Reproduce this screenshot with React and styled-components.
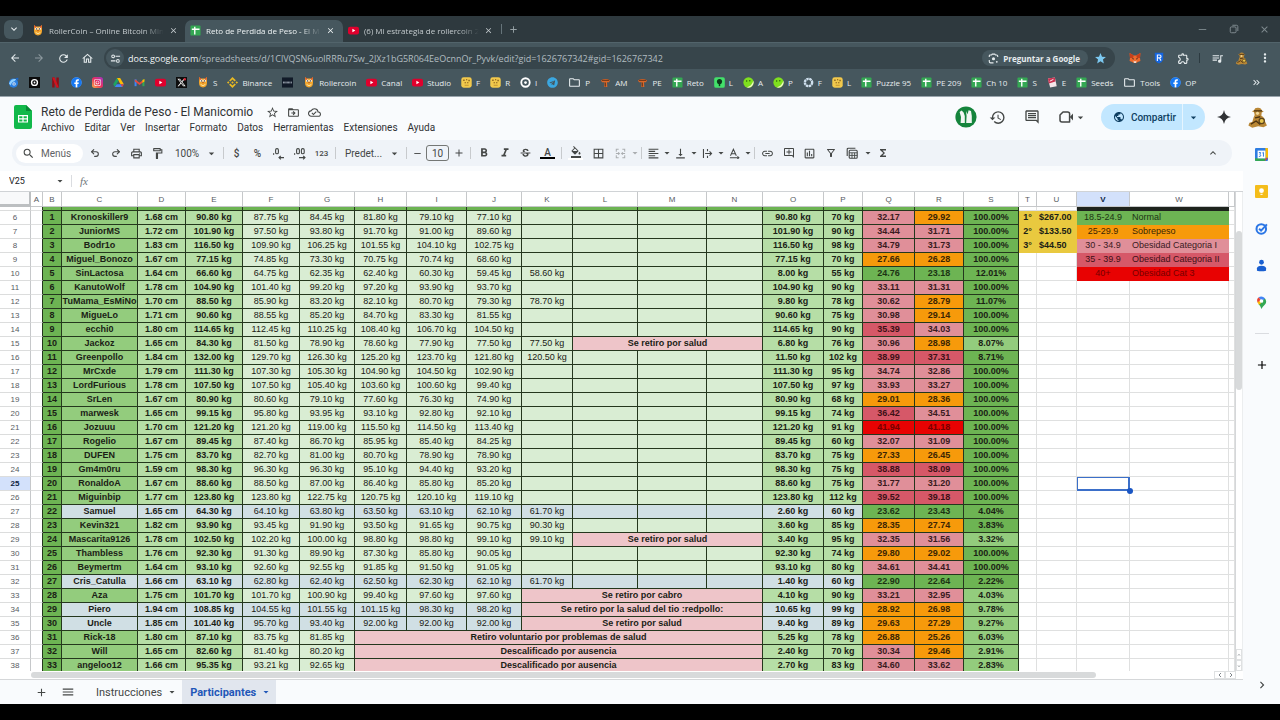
import React from 'react'
import styled, { createGlobalStyle, css } from 'styled-components'
import {
	MdAdd,
	MdArrowBack,
	MdArrowDropDown,
	MdArrowForward,
	MdBorderAll,
	MdClose,
	MdDriveFileMoveOutline,
	MdFormatAlignLeft,
	MdFormatBold,
	MdFormatColorFill,
	MdFormatItalic,
	MdFunctions,
	MdHistory,
	MdKeyboardArrowDown,
	MdKeyboardArrowUp,
	MdKeyboardDoubleArrowRight,
	MdLink,
	MdMenu,
	MdMoreVert,
	MdNavigateNext,
	MdOutlineAddComment,
	MdOutlineCloudDone,
	MdOutlineComment,
	MdOutlineExtension,
	MdOutlineFilterAlt,
	MdOutlineFolder,
	MdOutlineFormatPaint,
	MdOutlineHome,
	MdOutlineInsertChart,
	MdOutlinePrint,
	MdPublic,
	MdQueueMusic,
	MdRefresh,
	MdRemove,
	MdSearch,
	MdStar,
	MdStarBorder,
	MdStrikethroughS,
	MdVerticalAlignBottom,
} from 'react-icons/md'
import { FaFacebook, FaInstagram, FaTelegram } from 'react-icons/fa'
import { FaXTwitter } from 'react-icons/fa6'
import { SiBinance } from 'react-icons/si'
import { Redo2, Undo2 } from 'lucide-react'

const GlobalStyle = createGlobalStyle`
	* {
		box-sizing: border-box;
	}
	body {
		margin: 0;
		background: #000;
		font-family: Roboto, "Liberation Sans", sans-serif;
	}
	button, input, select {
		margin: 0;
		padding: 0;
		border: 0;
		background: none;
		color: inherit;
		font: inherit;
	}
	svg {
		flex-shrink: 0;
	}
`

const Screen = styled.div`
	display: flex;
	flex-direction: column;
	height: 100vh;
	padding: 16px 0;
	overflow: hidden;
	background: #000;
`

/* ---------- browser ---------- */

const Browser = styled.header`
	background: #46575e;
	color: #e6ecee;
	font-family: "Open Sans", "Noto Sans", sans-serif;
	border-bottom: 1px solid #9aa5ad;
`

const TabStrip = styled.div`
	display: flex;
	align-items: center;
	height: 26px;
	padding-left: 4px;
	background: #2e393e;
`

const TabSearch = styled.button`
	display: flex;
	align-items: center;
	justify-content: center;
	width: 19px;
	height: 19px;
	margin-right: 4px;
	border-radius: 6px;
	background: #46575e;
`

const Tab = styled.div`
	display: flex;
	align-items: center;
	width: 158px;
	height: 22px;
	margin-top: 4px;
	padding: 0 8px 2px 5px;
	gap: 5px;
	border-radius: 7px 7px 0 0;
	font-size: 8px;
	color: ${ p => p.$active ? '#eef3f4' : '#c3cacd' };
	background: ${ p => p.$active ? '#46575e' : 'transparent' };
`

const TabTitle = styled.span`
	flex: 1;
	white-space: nowrap;
	mask-image: linear-gradient(90deg, #000 82%, transparent);
`

const PlainButton = styled.button`
	display: flex;
	align-items: center;
	justify-content: center;
	width: ${ p => p.$w || 'auto' };
	color: ${ p => p.$color || 'inherit' };
	${ p => p.$end && css`
		margin-left: auto;
	` }
`

const TabDivider = styled.span`
	width: 1px;
	height: 10px;
	margin-right: 6px;
	background: #66747a;
`

const WindowControls = styled.div`
	display: flex;
	margin-left: auto;
	color: #7f8a8f;
`

const NavBar = styled.div`
	display: flex;
	align-items: center;
	height: 31px;
	padding: 0 3px;
	border-top: 1px solid #52646b;
`

const AddressBar = styled.div`
	display: flex;
	flex: 1;
	align-items: center;
	height: 22px;
	margin: 0 7px 0 5px;
	padding: 0 8px 0 2px;
	border-radius: 11px;
	background: #37454b;
`

const SiteInfo = styled.button`
	display: flex;
	align-items: center;
	justify-content: center;
	width: 18px;
	height: 18px;
	margin-right: 4px;
	border-radius: 9px;
	background: #46575e;
`

const Url = styled.div`
	flex: 1;
	font-size: 9px;
	white-space: nowrap;
	color: #b2bdc1;
`

const UrlHost = styled.span`
	color: #f2f6f7;
`

const AskGoogle = styled.button`
	display: flex;
	align-items: center;
	height: 16px;
	margin-right: 6px;
	padding: 0 8px 0 6px;
	gap: 4px;
	border-radius: 8px;
	background: #46575e;
	font-size: 8px;
	font-weight: 700;
	white-space: nowrap;
`

const NavDivider = styled.span`
	width: 1px;
	height: 10px;
	margin: 0 5px 0 4px;
	background: #2c3a40;
`

const Bookmarks = styled.nav`
	display: flex;
	align-items: center;
	height: 23px;
	padding: 0 18px 5px 3px;
	font-size: 8px;
`

const Bookmark = styled.a`
	display: flex;
	align-items: center;
	padding: 0 5px;
	gap: 4px;
	color: inherit;
	text-decoration: none;
	white-space: nowrap;
`

/* ---------- docs ---------- */

const Docs = styled.main`
	display: flex;
	flex: 1;
	flex-direction: column;
	min-height: 0;
	background: #f9fbfd;
	color: #444746;
`

const DocsHeader = styled.div`
	display: flex;
	align-items: center;
	height: 40px;
	padding: 0 7px 0 14px;
`

const TitleBlock = styled.div`
	display: flex;
	flex-direction: column;
	flex: 1;
	margin-left: 9px;
	padding-top: 4px;
`

const TitleRow = styled.div`
	display: flex;
	align-items: center;
	height: 17px;
	gap: 8px;
`

const DocTitle = styled.h1`
	margin: 0 5px 0 0;
	font-size: 12px;
	font-weight: 400;
	line-height: 16px;
	color: #303234;
`

const MenuRow = styled.div`
	display: flex;
	gap: 10px;
`

const MenuButton = styled.button`
	font-size: 10px;
	line-height: 14px;
	color: #303234;
`

const HeaderActions = styled.div`
	display: flex;
	align-items: center;
	gap: 8px;
`

const Share = styled.div`
	display: flex;
	height: 26px;
	margin-right: 2px;
	border-radius: 13px;
	overflow: hidden;
	background: #c2e7ff;
	color: #0f3f62;
`

const ShareButton = styled.button`
	display: flex;
	align-items: center;
	padding: 0 6px 0 12px;
	gap: 6px;
	font-size: 10px;
	font-weight: 500;
	border-right: 1px solid #e6f5ff;
`

const ShareMenu = styled.button`
	display: flex;
	align-items: center;
	width: 22px;
	padding-left: 4px;
`

const Body = styled.div`
	display: flex;
	flex: 1;
	min-height: 0;
`

const Editor = styled.div`
	display: flex;
	flex: 1;
	flex-direction: column;
	min-width: 0;
`

const Toolbar = styled.div`
	display: flex;
	align-items: center;
	height: 26px;
	margin: 3px 11px 5px 12px;
	padding: 0 8px 0 4px;
	border-radius: 13px;
	background: #eff3f8;
	font-size: 10px;
`

const SearchMenus = styled.label`
	display: flex;
	align-items: center;
	width: 67px;
	height: 19px;
	margin-right: 1px;
	padding-left: 6px;
	gap: 6px;
	border-radius: 10px;
	background: #fff;
`

const SearchInput = styled.input`
	width: 34px;
	&::placeholder {
		color: #5f6366;
		opacity: 1;
	}
`

const Tool = styled.button`
	display: flex;
	align-items: center;
	justify-content: center;
	width: ${ p => p.$w || '21px' };
	height: 20px;
	font-size: ${ p => p.$small ? '8px' : '10px' };
	font-weight: 500;
	opacity: ${ p => p.$off ? 0.4 : 1 };
`

const ToolDivider = styled.span`
	width: 1px;
	height: 12px;
	margin: 0 2px;
	background: #c7cacd;
`

const SelectBox = styled.label`
	display: flex;
	align-items: center;
	width: ${ p => p.$w };
	padding: 0 3px 0 7px;
`

const ToolSelect = styled.select`
	appearance: none;
	flex: 1;
	min-width: 0;
	font-size: 10px;
`

const FontSize = styled.input`
	width: 23px;
	height: 16px;
	border: 1px solid #747775;
	border-radius: 3px;
	text-align: center;
`

const ColorBar = styled.span`
	display: flex;
	flex-direction: column;
	align-items: center;
	width: 15px;
	font-size: 10px;
	line-height: 9px;
	border-bottom: 2px solid ${ p => p.$color };
`

const FormulaBar = styled.div`
	display: flex;
	align-items: center;
	height: 20px;
	padding-left: 9px;
	background: #fff;
`

const NameBox = styled.input`
	width: 45px;
	font-size: 9px;
	color: #202124;
`

const FormulaMark = styled.span`
	margin: 0 8px 0 5px;
	padding-left: 8px;
	border-left: 1px solid #dadce0;
	font: italic 11px "Liberation Serif", serif;
	color: #6f757a;
`

const FormulaInput = styled.input`
	flex: 1;
	font-size: 9px;
`

const GridFrame = styled.div`
	display: flex;
	flex: 1;
	min-height: 0;
	background: #fff;
	border-top: 1px solid #d0d3d6;
`

const GridClip = styled.div`
	flex: 1;
	min-width: 0;
	overflow: hidden;
`

const Sheet = styled.table`
	width: 100%;
	table-layout: fixed;
	border-spacing: 0;
	font: 9px/13px "Liberation Sans", Arial, sans-serif;
	color: #1a2115;
`

const Corner = styled.th`
	height: 15px;
	padding: 0;
	background: #f8f9fa;
	border-right: 2px solid #bcbfc1;
	border-bottom: 3px solid #bcbfc1;
`

const ColHead = styled.th`
	height: 15px;
	padding: 0;
	font-size: 8px;
	font-weight: ${ p => p.$on ? 700 : 400 };
	color: ${ p => p.$on ? '#0b1d3f' : '#575b5f' };
	background: ${ p => p.$on ? '#d3e1fb' : '#fff' };
	border-right: 1px solid #c6c8ca;
	border-bottom: 1px solid #c6c8ca;
`

const RowHead = styled.th`
	padding: 0;
	font-size: 8px;
	font-weight: ${ p => p.$on ? 700 : 400 };
	color: ${ p => p.$on ? '#0b1d3f' : '#575b5f' };
	background: ${ p => p.$on ? '#d3e1fb' : '#fff' };
	border-right: 1px solid #c6c8ca;
	border-bottom: 1px solid #dcdddd;
`

const Cell = styled.td`
	position: relative;
	height: ${ p => p.$thin ? '4px' : '14px' };
	padding: 0;
	white-space: nowrap;
	text-align: ${ p => p.$align || 'center' };
	font-weight: ${ p => p.$bold ? 700 : 400 };
	background: ${ p => p.$bg || '#fff' };
	border-right: 1px solid #dfe0e0;
	border-bottom: 1px solid #dfe0e0;
	${ p => p.$boxed && css`
		border-color: #24371d;
	` }
	${ p => p.$before && css`
		border-right-color: #24371d;
	` }
	${ p => p.$plain && css`
		padding: 0 2px;
		border-color: ${ p.$bg };
	` }
	${ p => p.$ink && css`
		color: ${ p.$ink };
	` }
`

const SelectedCell = styled(Cell)`
	box-shadow: inset 0 0 0 1px #3b6fc9;
	border-color: #3b6fc9;
	&::after {
		content: '';
		position: absolute;
		right: -4px;
		bottom: -4px;
		z-index: 1;
		width: 6px;
		height: 6px;
		border-radius: 3px;
		background: #1a56c4;
	}
`

const VScroll = styled.div`
	display: flex;
	flex-direction: column;
	width: 8px;
	border-left: 1px solid #d5d7d9;
	border-right: 1px solid #eceeef;
	background: #fff;
`

const VTrack = styled.div`
	display: flex;
	flex: 1;
	flex-direction: column;
	padding-top: 39px;
`

const VThumb = styled.div`
	height: 38%;
	border-radius: 3px;
	background: #d8dadb;
`

const ScrollStep = styled.button`
	display: flex;
	align-items: center;
	justify-content: center;
	width: ${ p => p.$side ? '11px' : '100%' };
	height: ${ p => p.$side ? '8px' : '11px' };
	border: 1px solid #dfe1e2;
	color: #80868b;
`

const HScroll = styled.div`
	display: flex;
	align-items: center;
	height: 9px;
	padding: 0 7px 0 31px;
	background: #fff;
	border-bottom: 1px solid #d5d7d9;
`

const HTrack = styled.div`
	flex: 1;
`

const HThumb = styled.div`
	width: 90%;
	height: 6px;
	border-radius: 3px;
	background: #d8dadb;
`

const SheetTabs = styled.div`
	display: flex;
	align-items: center;
	height: 24px;
	padding-left: 28px;
	background: #f9fbfd;
`

const TabList = styled.div`
	display: flex;
	margin-left: 7px;
`

const SheetTab = styled.button`
	display: flex;
	align-items: center;
	height: 24px;
	padding: 0 4px 0 8px;
	gap: 4px;
	font-size: 11px;
	font-weight: ${ p => p.$active ? 700 : 400 };
	color: ${ p => p.$active ? '#1f57b8' : '#444746' };
	background: ${ p => p.$active ? '#e1e6ee' : 'transparent' };
`

const SidePanel = styled.aside`
	display: flex;
	flex-direction: column;
	align-items: center;
	width: 37px;
	padding: 11px 0 12px;
	gap: 24px;
`

const SideDivider = styled.span`
	width: 14px;
	height: 1px;
	background: #dadce0;
`

const SideToggle = styled(PlainButton)`
	margin-top: auto;
`

/* ---------- small drawings ---------- */

const Icon = ({ size = 11, children }) => (
	<svg width={ size } height={ size } viewBox="0 0 12 12" fill="none">{ children }</svg>
)

const Owl = () => (
	<Icon size={ 12 }>
		<path d="M2 1 L4 2.4 H8 L10 1 L10 7 Q10 11 6 11.6 Q2 11 2 7Z" fill="#f2a52c" />
		<path d="M2 1 L4.4 3 L3 5Z M10 1 L7.6 3 L9 5Z" fill="#d4472a" />
		<circle cx="4.4" cy="4.8" r="1.3" fill="#fff" />
		<circle cx="7.6" cy="4.8" r="1.3" fill="#fff" />
		<circle cx="4.5" cy="4.9" r="0.6" fill="#222" />
		<circle cx="7.5" cy="4.9" r="0.6" fill="#222" />
		<path d="M5.2 6 H6.8 L6 7.4Z" fill="#a33a1c" />
		<path d="M3.6 8.4 Q6 11 8.4 8.4" stroke="#fbe3a0" strokeWidth="1" />
	</Icon>
)

const SheetMark = () => (
	<Icon>
		<rect x="0.5" y="0.5" width="11" height="11" rx="1" fill="#34a853" />
		<path d="M5.2 2 V10.4 M2 4.7 H10.4" stroke="#fff" strokeWidth="1.5" />
	</Icon>
)

const YouTube = () => (
	<Icon>
		<rect x="0" y="1.8" width="12" height="8.6" rx="2.2" fill="#e0002d" />
		<path d="M4.8 4.2 L8 6.1 L4.8 8Z" fill="#fff" />
	</Icon>
)

const Swirl = () => (
	<Icon>
		<circle cx="6" cy="6.6" r="5" fill="#2a7fe0" />
		<path d="M1 7 Q4 1 9 2.4 L7 4.6 Q4 5 3 9Z" fill="#8fd0ff" />
		<circle cx="6.6" cy="7.6" r="1.8" fill="#e8f4ff" />
		<circle cx="6.6" cy="7.6" r="0.8" fill="#1452a8" />
		<path d="M8 1 L11.4 0.8 L11 4.4Z" fill="#1b66c8" />
	</Icon>
)

const BlackRing = () => (
	<Icon>
		<rect width="12" height="12" fill="#0b0b0b" />
		<circle cx="6" cy="6" r="3.2" stroke="#fff" strokeWidth="1.5" />
		<circle cx="6" cy="6" r="1" fill="#fff" />
	</Icon>
)

const RedN = () => (
	<Icon>
		<path d="M2.4 0.6 H5 V11.4 H2.4Z M7 0.6 H9.6 V11.4 H7Z" fill="#8f0d15" />
		<path d="M2.4 0.6 H5 L9.6 11.4 H7Z" fill="#d2121f" />
	</Icon>
)

const Facebook = () => (
	<Icon>
		<circle cx="6" cy="6" r="5.4" fill="#fff" />
		<FaFacebook size={ 12 } color="#1778f2" />
	</Icon>
)

const Instagram = () => (
	<Icon>
		<defs>
			<linearGradient id="insta" x1="0" y1="1" x2="1" y2="0">
				<stop offset="0" stopColor="#fcb045" />
				<stop offset="0.5" stopColor="#e8305f" />
				<stop offset="1" stopColor="#a033c8" />
			</linearGradient>
		</defs>
		<rect width="12" height="12" rx="3" fill="url(#insta)" />
		<svg x="1.5" y="1.5" width="9" height="9"><FaInstagram size={ 9 } color="#fff" /></svg>
	</Icon>
)

const Drive = () => (
	<Icon>
		<path d="M4.2 1 H7.8 L11.8 8 H8.2Z" fill="#fbbc04" />
		<path d="M4.2 1 L6 4.2 L2 11 L0.2 8Z" fill="#1ea362" />
		<path d="M4 8 H11.8 L10 11 H2Z" fill="#4285f4" />
		<path d="M8.2 8 H11.8 L10 11Z" fill="#e94235" />
	</Icon>
)

const Gmail = () => (
	<Icon>
		<path d="M0.6 2.6 H2.8 V10 H0.6Z" fill="#4285f4" />
		<path d="M9.2 2.6 H11.4 V10 H9.2Z" fill="#34a853" />
		<path d="M1 2.4 L6 6.2 L11 2.4 V5 L6 8.6 L1 5Z" fill="#e8493a" />
		<path d="M9.2 3.6 L11.4 2.2 V4.8 L9.2 6.4Z" fill="#fbbc04" />
	</Icon>
)

const XLogo = () => (
	<Icon>
		<rect width="12" height="12" fill="#0d0d0d" />
		<svg x="1" y="1" width="10" height="10"><FaXTwitter size={ 10 } color="#f4f4f4" /></svg>
		<circle cx="9.6" cy="2.4" r="1.3" fill="#d62a3a" />
	</Icon>
)

const DarkBadge = () => (
	<Icon>
		<rect y="0.5" width="12" height="11" fill="#111a28" />
		<path d="M1.6 5 V7 M3 5 V7 M4.4 5 V7 M5.8 5 V7 M7.2 5 V7 M8.6 5 V7 M10.2 5 V7" stroke="#c8d2dc" strokeWidth="0.8" />
	</Icon>
)

const YellowFace = () => (
	<Icon>
		<rect x="0.3" y="0.3" width="11.4" height="11.4" rx="2.6" fill="#f2c94c" />
		<path d="M3.2 2.8 V4.4 M6.2 2.4 V3.6 M8.8 3 V4.6 M4.6 5.6 V6.8 M7.4 5.6 V6.8" stroke="#6b4312" strokeWidth="1.2" />
		<path d="M4 9 H8.4" stroke="#b98a2c" strokeWidth="0.9" />
	</Icon>
)

const WhiteRing = ({ hex }) => (
	<Icon>
		<circle cx="6" cy="6" r={ hex ? 4 : 4.6 } stroke={ hex ? '#cfe0ee' : '#fff' } strokeWidth={ hex ? 2.6 : 2 } strokeDasharray={ hex ? '2.6 0.6' : undefined } />
		{ !hex && <circle cx="6" cy="6" r="1.5" fill="#fff" /> }
	</Icon>
)

const Pillar = () => (
	<Icon>
		<path d="M1 3.6 Q6 0.8 11 3.6 L9.8 5.6 H7.6 L8 11 H4.6 L5 5.6 H2.2Z" fill="#d9682a" />
		<path d="M2 3.6 H10 M5.8 6 V10.4" stroke="#5a2a12" strokeWidth="1" />
	</Icon>
)

const GreenTree = () => (
	<Icon>
		<rect x="0.2" y="0.2" width="11.6" height="11.6" rx="2" fill="#43e06a" />
		<circle cx="6" cy="5" r="2.8" fill="#0c3a1b" />
		<path d="M6 6 V10" stroke="#0c3a1b" strokeWidth="1.6" />
	</Icon>
)

const Lime = () => (
	<Icon>
		<circle cx="6" cy="6" r="5.6" fill="#7fe01e" />
		<path d="M11.2 4 A5.6 5.6 0 0 1 4 11.2 Q9.6 10 11.2 4Z" fill="#f3f7c8" />
		<circle cx="4" cy="4.4" r="0.8" fill="#285c0a" />
		<circle cx="7.4" cy="4" r="0.8" fill="#285c0a" />
	</Icon>
)

const RedPaper = () => (
	<Icon>
		<path d="M1 1.6 L8.6 0.6 L10.6 10 L3.4 11.4Z" fill="#f4e6ea" />
		<path d="M1 1.6 L8.6 0.6 L9.2 5 L2 7Z" fill="#c93150" />
		<path d="M3 4.6 L7 2.6" stroke="#fff" strokeWidth="1" />
	</Icon>
)

const Fox = () => (
	<Icon size={ 12 }>
		<path d="M0.6 1 L4.8 3.4 H7.2 L11.4 1 L11 6 L11.4 9 L8.8 10 L7.2 11 H4.8 L3.2 10 L0.6 9 L1 6Z" fill="#ef6a2c" />
		<path d="M0.6 1 L4.8 3.4 L4 6 L1 6Z M11.4 1 L7.2 3.4 L8 6 L11 6Z" fill="#c4401d" />
		<path d="M4.4 8.6 L6 9.4 L7.6 8.6 L7 11 H5Z" fill="#f4d9c8" />
		<path d="M3.4 6.6 L4.8 7 M8.6 6.6 L7.2 7" stroke="#222" strokeWidth="0.9" />
	</Icon>
)

const Shield = () => (
	<Icon size={ 12 }>
		<path d="M1.8 0.8 H10.2 V7.4 Q9.6 10 6 11.6 Q2.4 10 1.8 7.4Z" fill="#1465e0" />
		<path d="M4.4 9 V3 H6.6 Q8 3 8 4.4 Q8 5.8 6.6 5.8 H4.6 M6.4 5.8 L8 8.6" stroke="#e8f1ff" strokeWidth="1.2" />
	</Icon>
)

const Monkey = ({ size = 13 }) => (
	<Icon size={ size }>
		<path d="M4 1.8 Q4.4 0.2 6.4 0.4 Q8.2 0.4 8.4 2 L9.6 2.6 L8.4 3.2 L8.2 5 Q10.2 6 10.2 8 L11.4 10.6 L9.4 11.6 L6.4 11 L3 11.8 L0.8 10.6 L1.4 9 L3 8.6 L3.8 5.8 L4.4 4.6 L4 3 L2.8 2.4Z" fill="#b98736" />
		<path d="M4 2.2 H8.6 M2.2 9.8 L5.2 8 L7.6 10 M4.6 6.2 L7.6 5.6" stroke="#4b3211" strokeWidth="0.8" />
		<circle cx="6" cy="3.6" r="0.9" fill="#f0d79a" />
		<circle cx="8.4" cy="8" r="1.5" stroke="#5c431c" strokeWidth="0.7" fill="#e6c44c" />
	</Icon>
)

const SiteSliders = () => (
	<Icon>
		<circle cx="3.4" cy="3.6" r="1.5" stroke="currentColor" strokeWidth="1.1" />
		<circle cx="8.6" cy="8.6" r="1.5" stroke="currentColor" strokeWidth="1.1" />
		<path d="M6 3.6 H11 M1 8.6 H6" stroke="currentColor" strokeWidth="1.2" />
	</Icon>
)

const Lens = () => (
	<Icon>
		<path d="M1.4 4.4 V3 Q1.4 2.2 2.4 2.2 H3.8 L4.6 1.2 H7.4 L8.2 2.2 H9.4 Q10.6 2.2 10.6 3.4 V4.4 M1.4 7.6 V9.4 Q1.4 10.8 2.8 10.8 H6" stroke="currentColor" strokeWidth="1.2" />
		<circle cx="6" cy="6.2" r="1.7" fill="currentColor" />
		<circle cx="9.6" cy="9.6" r="1" fill="currentColor" />
	</Icon>
)

const WinMin = () => <Icon size={ 9 }><path d="M1 6 H11" stroke="currentColor" strokeWidth="1.2" /></Icon>

const WinRestore = () => (
	<Icon size={ 10 }>
		<rect x="1.5" y="3.5" width="7" height="7" rx="1.4" stroke="currentColor" strokeWidth="1.2" />
		<path d="M4 1.5 H9 Q10.6 1.5 10.6 3 V8.4" stroke="currentColor" strokeWidth="1.2" />
	</Icon>
)

const SheetsLogo = () => (
	<svg width="18" height="24" viewBox="0 0 18 24">
		<path d="M2 0 H12 L18 6 V22 Q18 24 16 24 H2 Q0 24 0 22 V2 Q0 0 2 0Z" fill="#12b84a" />
		<path d="M12 0 L18 6 H12Z" fill="#078a35" />
		<path d="M4 10 H14 V17.6 H4Z M5.2 11.2 V13.2 H8.4 V11.2Z M9.6 11.2 V13.2 H12.8 V11.2Z M5.2 14.4 V16.4 H8.4 V14.4Z M9.6 14.4 V16.4 H12.8 V14.4Z" fill="#fff" fillRule="evenodd" />
	</svg>
)

const GreenAvatar = () => (
	<svg width="22" height="22" viewBox="0 0 22 22">
		<circle cx="11" cy="11" r="10.6" fill="#15843c" />
		<path d="M4.6 6 L6.6 4.4 L8.6 6.4 L9.8 10 V17 H5.6 L6 11Z" fill="#f1f6f2" />
		<path d="M11 5 L12.6 8.2 L13.6 4.2 L16 5 L16.8 10 V17 H11.2 L11.6 10Z" fill="#f1f6f2" />
	</svg>
)

const Camera = () => (
	<svg width="15" height="14" viewBox="0 0 15 14" fill="none">
		<path d="M4 2 H8.6 Q10.6 2 10.6 4 V12 H3 Q1 12 1 10 V5Z" stroke="currentColor" strokeWidth="1.5" strokeLinejoin="round" />
		<path d="M10.8 7 L14 3.4 V10.6Z" fill="currentColor" />
	</svg>
)

const Spark = () => (
	<Icon size={ 14 }><path d="M6 0 Q6.8 5.2 12 6 Q6.8 6.8 6 12 Q5.2 6.8 0 6 Q5.2 5.2 6 0Z" fill="#303234" /></Icon>
)

const Decimals = ({ more }) => (
	<svg width="14" height="13" viewBox="0 0 14 13" fill="none" stroke="currentColor">
		<path d="M1 7 H2.2" strokeWidth="1.3" />
		<rect x="3.6" y="1.6" width="2.8" height="5.2" rx="1.3" strokeWidth="1.1" />
		{ more && <rect x="8.4" y="1.6" width="2.8" height="5.2" rx="1.3" strokeWidth="1.1" /> }
		{ more
			? <path d="M6 10.6 H12 M10.2 8.8 L12 10.6 L10.2 12.4" strokeWidth="1.1" />
			: <path d="M12 10.6 H7 M8.8 8.8 L7 10.6 L8.8 12.4" strokeWidth="1.1" /> }
	</svg>
)

const MergeCells = () => (
	<Icon>
		<path d="M4 1.4 H1.4 V4 M8 1.4 H10.6 V4 M4 10.6 H1.4 V8 M8 10.6 H10.6 V8 M1 6 H4.6 M3.4 4.8 L4.8 6 L3.4 7.2 M11 6 H7.4 M8.6 4.8 L7.2 6 L8.6 7.2" stroke="currentColor" strokeWidth="1.1" />
	</Icon>
)

const WrapText = () => (
	<Icon>
		<path d="M1.6 1 V11 M6 1 V3.6 M6 8.4 V11 M3.4 6 H10.4 M8.2 3.8 L10.4 6 L8.2 8.2" stroke="currentColor" strokeWidth="1.2" />
	</Icon>
)

const RotateText = () => (
	<Icon>
		<path d="M1.6 8.4 L4.8 1.4 L8 8.4 M2.6 6.4 H7 M1 10.6 H10.6 M9.2 9 L10.8 10.6 L9.2 12" stroke="currentColor" strokeWidth="1.1" />
	</Icon>
)

const TableViews = () => (
	<Icon size={ 12 }>
		<path d="M1.2 9 V2.4 Q1.2 1.2 2.4 1.2 H9.4" stroke="currentColor" strokeWidth="1.1" />
		<rect x="3.2" y="3.2" width="8" height="8" rx="1" stroke="currentColor" strokeWidth="1.1" />
		<path d="M3.2 5.8 H11.2 M3.2 8.4 H11.2 M6 5.8 V11.2 M8.6 5.8 V11.2" stroke="currentColor" strokeWidth="0.9" />
	</Icon>
)

const Calendar = () => (
	<Icon size={ 13 }>
		<rect width="12" height="12" rx="1" fill="#2f7de1" />
		<path d="M9.6 0 H11 Q12 0 12 1 V9 H9.6Z" fill="#fbbc04" />
		<path d="M0 9.4 H9.4 V12 H1 Q0 12 0 11Z" fill="#34a853" />
		<path d="M9.4 12 V9.4 H12Z" fill="#ea4335" />
		<rect x="2.4" y="2.4" width="7.2" height="7.2" fill="#fff" />
		<path d="M3.6 4.2 H5.2 L4.6 5.8 Q5.8 6.6 5 7.6 L3.6 7.8 M6.8 4.6 L7.8 4 V8" stroke="#2f7de1" strokeWidth="0.9" />
	</Icon>
)

const Keep = () => (
	<Icon size={ 13 }>
		<rect width="12" height="12" rx="1" fill="#f4bd1b" />
		<circle cx="6" cy="5.2" r="2.2" fill="#fff" />
		<path d="M5 8.6 H7" stroke="#fff" strokeWidth="1" />
	</Icon>
)

const Tasks = () => (
	<Icon size={ 13 }>
		<circle cx="5.8" cy="6.4" r="4.4" stroke="#2b76e5" strokeWidth="1.9" />
		<path d="M3.8 6.2 L5.6 8 L11 2.2" stroke="#2b76e5" strokeWidth="1.8" />
	</Icon>
)

const Contacts = () => (
	<Icon size={ 13 }>
		<circle cx="6" cy="3" r="2.2" fill="#1a5fd0" />
		<path d="M1.8 10.8 V8.6 Q2 6.2 6 6.2 Q10 6.2 10.2 8.6 V10.8 Q6 12 1.8 10.8Z" fill="#1a5fd0" />
	</Icon>
)

const Maps = () => (
	<Icon size={ 13 }>
		<path d="M6 12 Q5.4 9.4 3.4 7.6 L9 2 Q11.4 5 9.4 7.6 Q7.2 9.6 6 12Z" fill="#34a853" />
		<path d="M2.4 6 Q1 3 3.6 1.2 L6 4.4Z" fill="#ea4335" />
		<path d="M3.4 1.2 Q6.6 -0.6 9.4 2.4 L6.4 4.6Z" fill="#4285f4" />
		<path d="M2.2 5.6 L4.6 4.6 L5.6 6.6 L3.6 8Z" fill="#fbbc04" />
		<circle cx="6" cy="4.6" r="1.7" fill="#fff" />
	</Icon>
)

/* ---------- data ---------- */

const bookmarks = [
	[<Swirl />], [<BlackRing />], [<RedN />], [<Facebook />], [<Instagram />], [<Drive />], [<Gmail />], [<YouTube />], [<XLogo />],
	[<Owl />, 'S'],
	[<SiBinance size={ 11 } color="#e8b923" />, 'Binance'],
	[<DarkBadge />],
	[<Owl />, 'Rollercoin'],
	[<YouTube />, 'Canal'],
	[<YouTube />, 'Studio'],
	[<YellowFace />, 'F'],
	[<YellowFace />, 'R'],
	[<WhiteRing />, 'I'],
	[<FaTelegram size={ 11 } color="#3ba7e0" />],
	[<MdOutlineFolder size={ 13 } />, 'P'],
	[<Pillar />, 'AM'],
	[<Pillar />, 'PE'],
	[<SheetMark />, 'Reto'],
	[<GreenTree />, 'L'],
	[<Lime />, 'A'],
	[<Lime />, 'P'],
	[<WhiteRing hex />, 'F'],
	[<YellowFace />, 'L'],
	[<SheetMark />, 'Puzzle 95'],
	[<SheetMark />, 'PE 209'],
	[<SheetMark />, 'Ch 10'],
	[<SheetMark />, 'S'],
	[<RedPaper />, 'E'],
	[<SheetMark />, 'Seeds'],
	[<MdOutlineFolder size={ 13 } />, 'Tools'],
	[<Facebook />, 'OP'],
]

const menus = ['Archivo', 'Editar', 'Ver', 'Insertar', 'Formato', 'Datos', 'Herramientas', 'Extensiones', 'Ayuda']

const columns = [
	['A', 12], ['B', 19], ['C', 76], ['D', 48], ['E', 57], ['F', 57], ['G', 55], ['H', 52], ['I', 60], ['J', 55],
	['K', 51], ['L', 65], ['M', 69], ['N', 56], ['O', 61], ['P', 39], ['Q', 52], ['R', 49], ['S', 55], ['T', 18],
	['U', 40], ['V', 53], ['W', 99],
]

// name, height, start, weekly weights, lost, goal, bmi at start, bmi now, percent, note
const people = [
	['Kronoskiller9', '1.68', '90.80', '87.75 84.45 81.80 79.10 77.10', '90.80', 70, '32.17', '29.92', '100.00'],
	['JuniorMS', '1.72', '101.90', '97.50 93.80 91.70 91.00 89.60', '101.90', 90, '34.44', '31.71', '100.00'],
	['Bodr1o', '1.83', '116.50', '109.90 106.25 101.55 104.10 102.75', '116.50', 98, '34.79', '31.73', '100.00'],
	['Miguel_Bonozo', '1.67', '77.15', '74.85 73.30 70.75 70.74 68.60', '77.15', 70, '27.66', '26.28', '100.00'],
	['SinLactosa', '1.64', '66.60', '64.75 62.35 62.40 60.30 59.45 58.60', '8.00', 55, '24.76', '23.18', '12.01'],
	['KanutoWolf', '1.78', '104.90', '101.40 99.20 97.20 93.90 93.70', '104.90', 90, '33.11', '31.31', '100.00'],
	['TuMama_EsMiNo', '1.70', '88.50', '85.90 83.20 82.10 80.70 79.30 78.70', '9.80', 78, '30.62', '28.79', '11.07'],
	['MigueLo', '1.71', '90.60', '88.55 85.20 84.70 83.30 81.55', '90.60', 75, '30.98', '29.14', '100.00'],
	['ecchi0', '1.80', '114.65', '112.45 110.25 108.40 106.70 104.50', '114.65', 90, '35.39', '34.03', '100.00'],
	['Jackoz', '1.65', '84.30', '81.50 78.90 78.60 77.90 77.50 77.50', '6.80', 76, '30.96', '28.98', '8.07', 'Se retiro por salud'],
	['Greenpollo', '1.84', '132.00', '129.70 126.30 125.20 123.70 121.80 120.50', '11.50', 102, '38.99', '37.31', '8.71'],
	['MrCxde', '1.79', '111.30', '107.30 105.30 104.90 104.50 102.90', '111.30', 95, '34.74', '32.86', '100.00'],
	['LordFurious', '1.78', '107.50', '107.50 105.40 103.60 100.60 99.40', '107.50', 97, '33.93', '33.27', '100.00'],
	['SrLen', '1.67', '80.90', '80.60 79.10 77.60 76.30 74.90', '80.90', 68, '29.01', '28.36', '100.00'],
	['marwesk', '1.65', '99.15', '95.80 93.95 93.10 92.80 92.10', '99.15', 74, '36.42', '34.51', '100.00'],
	['Jozuuu', '1.70', '121.20', '121.20 119.00 115.50 114.50 113.40', '121.20', 91, '41.94', '41.18', '100.00'],
	['Rogelio', '1.67', '89.45', '87.40 86.70 85.95 85.40 84.25', '89.45', 60, '32.07', '31.09', '100.00'],
	['DUFEN', '1.75', '83.70', '82.70 81.00 80.70 78.90 78.90', '83.70', 75, '27.33', '26.45', '100.00'],
	['Gm4m0ru', '1.59', '98.30', '96.30 96.30 95.10 94.40 93.20', '98.30', 75, '38.88', '38.09', '100.00'],
	['RonaldoA', '1.67', '88.60', '88.50 87.00 86.40 85.80 85.20', '88.60', 75, '31.77', '31.20', '100.00'],
	['Miguinbip', '1.77', '123.80', '123.80 122.75 120.75 120.10 119.10', '123.80', 112, '39.52', '39.18', '100.00'],
	['Samuel', '1.65', '64.30', '64.10 63.80 63.50 63.10 62.10 61.70', '2.60', 60, '23.62', '23.43', '4.04'],
	['Kevin321', '1.82', '93.90', '93.45 91.90 93.50 91.65 90.75 90.30', '3.60', 85, '28.35', '27.74', '3.83'],
	['Mascarita9126', '1.78', '102.50', '102.20 100.00 98.80 98.80 99.10 99.10', '3.40', 95, '32.35', '31.56', '3.32', 'Se retiro por salud'],
	['Thambless', '1.76', '92.30', '91.30 89.90 87.30 85.80 90.05', '92.30', 74, '29.80', '29.02', '100.00'],
	['Beymertm', '1.64', '93.10', '92.60 92.55 91.85 91.50 91.05', '93.10', 80, '34.61', '34.41', '100.00'],
	['Cris_Catulla', '1.66', '63.10', '62.80 62.40 62.50 62.30 62.10 61.70', '1.40', 60, '22.90', '22.64', '2.22'],
	['Aza', '1.75', '101.70', '101.70 100.90 99.40 97.60 97.60', '4.10', 90, '33.21', '32.95', '4.03', 'Se retiro por cabro'],
	['Piero', '1.94', '108.85', '104.55 101.55 101.15 98.30 98.20', '10.65', 99, '28.92', '26.98', '9.78', 'Se retiro por la salud del tio :redpollo:'],
	['Uncle', '1.85', '101.40', '95.70 93.40 92.00 92.00 92.00', '9.40', 89, '29.63', '27.29', '9.27', 'Se retiro por salud'],
	['Rick-18', '1.80', '87.10', '83.75 81.85', '5.25', 78, '26.88', '25.26', '6.03', 'Retiro voluntario por problemas de salud'],
	['Will', '1.65', '82.60', '81.40 80.20', '2.40', 70, '30.34', '29.46', '2.91', 'Descalificado por ausencia'],
	['angeloo12', '1.66', '95.35', '93.21 92.65', '2.70', 83, '34.60', '33.62', '2.83', 'Descalificado por ausencia'],
]

const WEEKS = 9
const blueRows = [22, 27, 29, 30]
const prizes = [['1°', '$267.00'], ['2°', '$133.50'], ['3°', '$44.50']]

const green = { dark: '#6db453', mid: '#93cc7d', soft: '#b6dea6', pale: '#d9edd3' }
const blue = '#d0dfe4'
const pink = '#eec5c9'
const gold = '#e9c93f'

const bmiScale = [
	{ max: 25, bg: green.dark, ink: '#1c3313', range: '18.5-24.9', label: 'Normal' },
	{ max: 30, bg: '#f79a0b', ink: '#3b2503', range: '25-29.9', label: 'Sobrepeso' },
	{ max: 35, bg: '#e08f99', ink: '#3a1a1e', range: '30 - 34.9', label: 'Obesidad Categoria I' },
	{ max: 40, bg: '#d65868', ink: '#3d1016', range: '35 - 39.9', label: 'Obesidad Categoria II' },
	{ max: 999, bg: '#e80202', ink: '#760000', range: '40+', label: 'Obesidad Cat 3' },
]

const scaleOf = bmi => bmiScale.find(step => Number(bmi) < step.max)

const BmiCell = ({ value }) => {
	const step = scaleOf(value)
	return <Cell $boxed $bold $bg={ step.bg } $ink={ step.ink }>{ value }</Cell>
}

const PersonRow = ({ person, index }) => {
	const [name, height, start, weekly, lost, goal, bmiStart, bmiNow, percent, note] = person
	const place = index + 1
	const rowNumber = index + 6
	const weights = weekly.split(' ')
	const left = WEEKS - weights.length
	const tint = color => blueRows.includes(place) ? blue : color
	const lightPercent = place === 10 || place === 24 || place > 27
	const prize = prizes[index]
	const step = bmiScale[index]

	return (
		<tr>
			<RowHead scope="row" $on={ rowNumber === 25 }>{ rowNumber }</RowHead>
			<Cell $before />
			<Cell $boxed $bold $bg={ green.dark }>{ place }</Cell>
			<Cell $boxed $bold $bg={ tint(green.mid) }>{ name }</Cell>
			<Cell $boxed $bold $bg={ tint(green.soft) }>{ height + ' cm' }</Cell>
			<Cell $boxed $bold $bg={ tint(green.soft) }>{ start + ' kg' }</Cell>
			{ weights.map((weight, i) => (
				<Cell key={ i } $boxed $bg={ tint(green.pale) }>{ weight + ' kg' }</Cell>
			)) }
			{ note
				? <Cell $boxed $bold $bg={ pink } colSpan={ left }>{ note }</Cell>
				: Array.from({ length: left }, (_, i) => <Cell key={ i } $boxed $bg={ tint(green.pale) } />) }
			<Cell $boxed $bold $bg={ tint(green.soft) }>{ lost + ' kg' }</Cell>
			<Cell $boxed $bold $bg={ tint(green.soft) }>{ goal + ' kg' }</Cell>
			<BmiCell value={ bmiStart } />
			<BmiCell value={ bmiNow } />
			<Cell $boxed $bold $bg={ lightPercent ? green.mid : green.dark }>{ percent + '%' }</Cell>
			{ prize
				? <>
					<Cell $plain $bold $bg={ gold }>{ prize[0] }</Cell>
					<Cell $plain $bold $bg={ gold } $align="left">{ prize[1] }</Cell>
				</>
				: <><Cell /><Cell /></> }
			{ step
				? <>
					<Cell $plain $bg={ step.bg } $ink={ step.ink }>{ step.range }</Cell>
					<Cell $plain $bg={ step.bg } $ink={ step.ink } $align="left">{ step.label }</Cell>
				</>
				: <>{ rowNumber === 25 ? <SelectedCell /> : <Cell /> }<Cell /></> }
			<Cell />
		</tr>
	)
}

const Grid = () => (
	<Sheet>
		<colgroup>
			<col width="31" />
			{ columns.map(([letter, width]) => <col key={ letter } width={ width } />) }
			<col />
		</colgroup>
		<thead>
			<tr>
				<Corner />
				{ columns.map(([letter]) => (
					<ColHead key={ letter } scope="col" $on={ letter === 'V' }>{ letter }</ColHead>
				)) }
				<ColHead />
			</tr>
		</thead>
		<tbody>
			<tr>
				<RowHead />
				<Cell $thin $before />
				{ columns.slice(1, 19).map(([letter]) => (
					<Cell key={ letter } $thin $boxed $bg={ green.dark } />
				)) }
				<Cell $thin />
				<Cell $thin />
				<Cell $thin $plain $bg="#1e231d" />
				<Cell $thin $plain $bg="#1e231d" />
				<Cell $thin />
			</tr>
			{ people.map((person, i) => <PersonRow key={ person[0] } person={ person } index={ i } />) }
		</tbody>
	</Sheet>
)

const Split = ({ icon, label, w = '18px' }) => (
	<>
		<Tool $w={ w } aria-label={ label }>{ icon }</Tool>
		<Tool $w="9px" aria-label={ label + ', opciones' }><MdArrowDropDown size={ 12 } /></Tool>
	</>
)

const SheetsToolbar = () => (
	<Toolbar>
		<SearchMenus>
			<MdSearch size={ 13 } />
			<SearchInput placeholder="Menús" aria-label="Menús" />
		</SearchMenus>
		<Tool aria-label="Deshacer"><Undo2 size={ 10 } strokeWidth={ 2.6 } /></Tool>
		<Tool aria-label="Rehacer"><Redo2 size={ 10 } strokeWidth={ 2.6 } /></Tool>
		<Tool aria-label="Imprimir"><MdOutlinePrint size={ 13 } /></Tool>
		<Tool aria-label="Copiar formato"><MdOutlineFormatPaint size={ 13 } /></Tool>
		<SelectBox $w="53px">
			<ToolSelect aria-label="Zoom"><option>{'100%'}</option></ToolSelect>
			<MdArrowDropDown size={ 13 } />
		</SelectBox>
		<ToolDivider />
		<Tool aria-label="Moneda">{'$'}</Tool>
		<Tool aria-label="Porcentaje">{'%'}</Tool>
		<Tool aria-label="Menos decimales"><Decimals /></Tool>
		<Tool aria-label="Más decimales"><Decimals more /></Tool>
		<Tool $w="23px" $small>{'123'}</Tool>
		<ToolDivider />
		<SelectBox $w="66px">
			<ToolSelect aria-label="Fuente"><option>{'Predet...'}</option></ToolSelect>
			<MdArrowDropDown size={ 13 } />
		</SelectBox>
		<ToolDivider />
		<Tool $w="17px" aria-label="Reducir"><MdRemove size={ 11 } /></Tool>
		<FontSize aria-label="Tamaño de fuente" defaultValue="10" />
		<Tool $w="19px" aria-label="Aumentar"><MdAdd size={ 12 } /></Tool>
		<ToolDivider />
		<Tool aria-label="Negrita"><MdFormatBold size={ 14 } /></Tool>
		<Tool aria-label="Cursiva"><MdFormatItalic size={ 14 } /></Tool>
		<Tool aria-label="Tachado"><MdStrikethroughS size={ 13 } /></Tool>
		<Tool $w="23px" aria-label="Color del texto"><ColorBar $color="#000">{'A'}</ColorBar></Tool>
		<ToolDivider />
		<Tool $w="23px" aria-label="Color de relleno"><ColorBar $color="#fff"><MdFormatColorFill size={ 12 } /></ColorBar></Tool>
		<Tool $w="22px" aria-label="Bordes"><MdBorderAll size={ 13 } /></Tool>
		<Tool $w="22px" $off aria-label="Combinar celdas"><MergeCells /></Tool>
		<Tool $w="8px" $off aria-label="Tipo de combinación"><MdArrowDropDown size={ 12 } /></Tool>
		<ToolDivider />
		<Split label="Alineación horizontal" icon={ <MdFormatAlignLeft size={ 13 } /> } />
		<Split label="Alineación vertical" icon={ <MdVerticalAlignBottom size={ 13 } /> } />
		<Split label="Ajuste de texto" icon={ <WrapText /> } />
		<Split label="Rotación de texto" icon={ <RotateText /> } />
		<ToolDivider />
		<Tool aria-label="Insertar enlace"><MdLink size={ 13 } /></Tool>
		<Tool aria-label="Insertar comentario"><MdOutlineAddComment size={ 12 } /></Tool>
		<Tool aria-label="Insertar gráfico"><MdOutlineInsertChart size={ 13 } /></Tool>
		<Tool aria-label="Crear filtro"><MdOutlineFilterAlt size={ 12 } /></Tool>
		<Split w="22px" label="Vistas de tabla" icon={ <TableViews /> } />
		<Tool aria-label="Funciones"><MdFunctions size={ 12 } /></Tool>
		<PlainButton $end $w="22px" aria-label="Ocultar menús"><MdKeyboardArrowUp size={ 12 } /></PlainButton>
	</Toolbar>
)

const BrowserTab = ({ icon, title, active }) => (
	<Tab $active={ active }>
		{ icon }
		<TabTitle>{ title }</TabTitle>
		<PlainButton aria-label="Cerrar pestaña"><MdClose size={ 9 } /></PlainButton>
	</Tab>
)

const BrowserChrome = () => (
	<Browser>
		<TabStrip>
			<TabSearch aria-label="Buscar pestañas"><MdKeyboardArrowDown size={ 12 } /></TabSearch>
			<BrowserTab icon={ <Owl /> } title="RollerCoin – Online Bitcoin Min" />
			<BrowserTab active icon={ <SheetMark /> } title="Reto de Perdida de Peso - El M" />
			<BrowserTab icon={ <YouTube /> } title="(6) Mi estrategia de rollercoin 2" />
			<TabDivider />
			<PlainButton aria-label="Nueva pestaña"><MdAdd size={ 11 } color="#98a3a7" /></PlainButton>
			<WindowControls>
				<PlainButton $w="31px" aria-label="Minimizar"><WinMin /></PlainButton>
				<PlainButton $w="31px" aria-label="Restaurar"><WinRestore /></PlainButton>
				<PlainButton $w="31px" aria-label="Cerrar"><MdClose size={ 11 } /></PlainButton>
			</WindowControls>
		</TabStrip>
		<NavBar>
			<PlainButton $w="24px" aria-label="Atrás"><MdArrowBack size={ 12 } /></PlainButton>
			<PlainButton $w="24px" $color="#8d9a9f" aria-label="Adelante"><MdArrowForward size={ 12 } /></PlainButton>
			<PlainButton $w="24px" aria-label="Recargar"><MdRefresh size={ 13 } /></PlainButton>
			<PlainButton $w="24px" aria-label="Inicio"><MdOutlineHome size={ 13 } /></PlainButton>
			<AddressBar>
				<SiteInfo aria-label="Información del sitio"><SiteSliders /></SiteInfo>
				<Url>
					<UrlHost>{'docs.google.com'}</UrlHost>
					{'/spreadsheets/d/1ClVQSN6uolRRRu7Sw_2JXz1bG5R064EeOcnnOr_Pyvk/edit?gid=1626767342#gid=1626767342'}
				</Url>
				<AskGoogle><Lens />{'Preguntar a Google'}</AskGoogle>
				<PlainButton $color="#7cc8f0" aria-label="Favorito"><MdStar size={ 13 } /></PlainButton>
			</AddressBar>
			<PlainButton $w="25px" aria-label="MetaMask"><Fox /></PlainButton>
			<PlainButton $w="24px" aria-label="Ronin"><Shield /></PlainButton>
			<PlainButton $w="24px" aria-label="Extensiones"><MdOutlineExtension size={ 13 } /></PlainButton>
			<NavDivider />
			<PlainButton $w="24px" aria-label="Multimedia"><MdQueueMusic size={ 13 } /></PlainButton>
			<PlainButton $w="24px" aria-label="Perfil"><Monkey /></PlainButton>
			<PlainButton $w="24px" aria-label="Más"><MdMoreVert size={ 14 } /></PlainButton>
		</NavBar>
		<Bookmarks>
			{ bookmarks.map(([icon, label], i) => (
				<Bookmark key={ i } href="#">{ icon }{ label }</Bookmark>
			)) }
			<PlainButton $end aria-label="Más marcadores"><MdKeyboardDoubleArrowRight size={ 11 } /></PlainButton>
		</Bookmarks>
	</Browser>
)

const App = () => (
	<Screen>
		<GlobalStyle />
		<BrowserChrome />
		<Docs>
			<DocsHeader>
				<SheetsLogo />
				<TitleBlock>
					<TitleRow>
						<DocTitle>{'Reto de Perdida de Peso - El Manicomio'}</DocTitle>
						<PlainButton aria-label="Destacar"><MdStarBorder size={ 13 } /></PlainButton>
						<PlainButton aria-label="Mover"><MdDriveFileMoveOutline size={ 13 } /></PlainButton>
						<PlainButton aria-label="Guardado"><MdOutlineCloudDone size={ 13 } /></PlainButton>
					</TitleRow>
					<MenuRow>
						{ menus.map(menu => <MenuButton key={ menu }>{ menu }</MenuButton>) }
					</MenuRow>
				</TitleBlock>
				<HeaderActions>
					<PlainButton $w="22px" aria-label="Colaborador"><GreenAvatar /></PlainButton>
					<PlainButton $w="26px" aria-label="Historial"><MdHistory size={ 17 } /></PlainButton>
					<PlainButton $w="26px" aria-label="Comentarios"><MdOutlineComment size={ 16 } /></PlainButton>
					<PlainButton $w="40px" aria-label="Reunión"><Camera /><MdArrowDropDown size={ 13 } /></PlainButton>
					<Share>
						<ShareButton><MdPublic size={ 12 } />{'Compartir'}</ShareButton>
						<ShareMenu aria-label="Opciones para compartir"><MdArrowDropDown size={ 13 } /></ShareMenu>
					</Share>
					<PlainButton $w="18px" aria-label="Gemini"><Spark /></PlainButton>
					<PlainButton $w="32px" aria-label="Cuenta"><Monkey size={ 21 } /></PlainButton>
				</HeaderActions>
			</DocsHeader>
			<Body>
				<Editor>
					<SheetsToolbar />
					<FormulaBar>
						<NameBox aria-label="Cuadro de nombres" defaultValue="V25" />
						<MdArrowDropDown size={ 12 } />
						<FormulaMark>{'fx'}</FormulaMark>
						<FormulaInput aria-label="Fórmula" />
					</FormulaBar>
					<GridFrame>
						<GridClip><Grid /></GridClip>
						<VScroll>
							<VTrack><VThumb /></VTrack>
							<ScrollStep aria-label="Arriba"><MdKeyboardArrowUp size={ 6 } /></ScrollStep>
							<ScrollStep aria-label="Abajo"><MdKeyboardArrowDown size={ 6 } /></ScrollStep>
						</VScroll>
					</GridFrame>
					<HScroll>
						<HTrack><HThumb /></HTrack>
						<ScrollStep $side aria-label="Izquierda"><Icon size={ 6 }><path d="M8 2 L4 6 L8 10" stroke="currentColor" strokeWidth="2" /></Icon></ScrollStep>
						<ScrollStep $side aria-label="Derecha"><Icon size={ 6 }><path d="M4 2 L8 6 L4 10" stroke="currentColor" strokeWidth="2" /></Icon></ScrollStep>
					</HScroll>
					<SheetTabs>
						<PlainButton $w="26px" aria-label="Añadir hoja"><MdAdd size={ 13 } /></PlainButton>
						<PlainButton $w="27px" aria-label="Todas las hojas"><MdMenu size={ 14 } /></PlainButton>
						<TabList>
							<SheetTab>{'Instrucciones'}<MdArrowDropDown size={ 12 } /></SheetTab>
							<SheetTab $active>{'Participantes'}<MdArrowDropDown size={ 12 } /></SheetTab>
						</TabList>
					</SheetTabs>
				</Editor>
				<SidePanel>
					<PlainButton aria-label="Calendar"><Calendar /></PlainButton>
					<PlainButton aria-label="Keep"><Keep /></PlainButton>
					<PlainButton aria-label="Tasks"><Tasks /></PlainButton>
					<PlainButton aria-label="Contactos"><Contacts /></PlainButton>
					<PlainButton aria-label="Maps"><Maps /></PlainButton>
					<SideDivider />
					<PlainButton aria-label="Obtener complementos"><MdAdd size={ 14 } color="#000" /></PlainButton>
					<SideToggle aria-label="Ocultar panel lateral"><MdNavigateNext size={ 14 } /></SideToggle>
				</SidePanel>
			</Body>
		</Docs>
	</Screen>
)

export default App
